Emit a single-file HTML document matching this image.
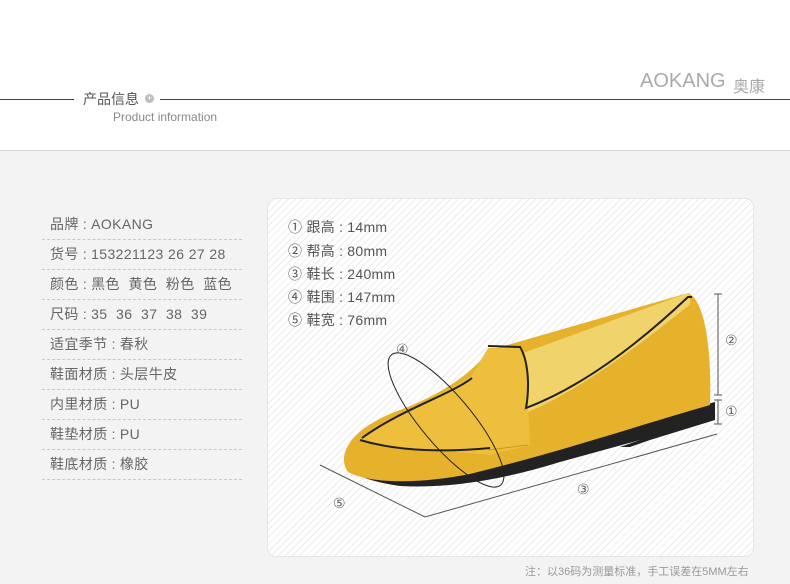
<!DOCTYPE html>
<html><head><meta charset="utf-8"><style>
body{margin:0;width:790px;height:584px;overflow:hidden;font-family:"Liberation Sans","Noto Sans CJK SC",sans-serif;background:#f3f3f3;position:relative}
.top{position:absolute;left:0;top:0;width:790px;height:150px;background:#fff;border-bottom:1px solid #d6d6d6}
.abs{position:absolute}
.row{position:absolute;left:42px;width:200px;height:30px;border-bottom:1px dashed #c8c8c8;font-size:14px;color:#666;line-height:29px;padding-left:8px;box-sizing:border-box;white-space:nowrap;letter-spacing:0.4px}
.card{position:absolute;left:267px;top:198px;width:485px;height:357px;border-radius:9px;border:1px solid #e6e6e6;background:#fff repeating-linear-gradient(135deg,#fff 0 4px,#ececec 4px 5px)}
.m{position:absolute;left:288px;font-size:14px;color:#555;white-space:nowrap;letter-spacing:0.3px}
.c{margin:0 4px}
</style></head><body>
<div class="top">
<div class="abs" style="left:0;top:99px;width:74px;height:1px;background:#444"></div>
<div class="abs" style="left:83px;top:89px;font-size:14px;color:#555">产品信息</div>
<div class="abs" style="left:145px;top:94px;width:9px;height:9px;border-radius:50%;background:#bbb;color:#fff;font-size:9px;line-height:9px;text-align:center">+</div>
<div class="abs" style="left:160px;top:99px;width:630px;height:1px;background:#444"></div>
<div class="abs" style="left:113px;top:110px;font-size:12px;color:#888">Product information</div>
<div class="abs" style="left:640px;top:70px;font-size:20px;color:#aaa">AOKANG</div>
<div class="abs" style="left:733px;top:73px;font-size:16px;color:#aaa">奥康</div>
</div>
<div class="row" style="top:210px">品牌<span class="c">:</span>AOKANG</div>
<div class="row" style="top:240px">货号<span class="c">:</span>153221123 26 27 28</div>
<div class="row" style="top:270px">颜色<span class="c">:</span>黑色&nbsp; 黄色&nbsp; 粉色&nbsp; 蓝色</div>
<div class="row" style="top:300px">尺码<span class="c">:</span>35&nbsp; 36&nbsp; 37&nbsp; 38&nbsp; 39</div>
<div class="row" style="top:330px">适宜季节<span class="c">:</span>春秋</div>
<div class="row" style="top:360px">鞋面材质<span class="c">:</span>头层牛皮</div>
<div class="row" style="top:390px">内里材质<span class="c">:</span>PU</div>
<div class="row" style="top:420px">鞋垫材质<span class="c">:</span>PU</div>
<div class="row" style="top:450px">鞋底材质<span class="c">:</span>橡胶</div>
<div class="card"></div>
<div class="m" style="top:217px">① 跟高<span class="c">:</span>14mm</div>
<div class="m" style="top:241px">② 帮高<span class="c">:</span>80mm</div>
<div class="m" style="top:264px">③ 鞋长<span class="c">:</span>240mm</div>
<div class="m" style="top:287px">④ 鞋围<span class="c">:</span>147mm</div>
<div class="m" style="top:310px">⑤ 鞋宽<span class="c">:</span>76mm</div>
<svg class="abs" style="left:0;top:0" width="790" height="584">
<path d="M346 460 Q345 478 400 486 Q470 490 560 462 L640 440 L620 447 L630 447 L650 440 L715 420 L715 402 L648 420 Q570 440 470 468 Z" fill="#222"/>
<path d="M348 472 C336 455 350 428 400 410 C440 395 470 375 490 350 L688 293 C705 300 712 350 710 405 C640 425 560 452 470 474 C420 484 370 484 348 472Z" fill="#e6b22c"/>
<path d="M515 356 L688 293 C692 300 690 306 688 306 C640 345 580 390 528 412 Z" fill="#f0d36a"/>
<path d="M360 440 C380 420 440 398 472 375 L488 348 L520 348 C528 360 530 385 528 405 L530 445 L490 455 C440 450 390 448 360 440Z" fill="#eebf3c"/>
<path d="M360 440 C400 452 450 452 490 448 M362 438 C400 410 450 395 472 378 M488 346 L520 347 C528 360 530 385 526 408 Q600 380 688 297 L692 297" stroke="#222" stroke-width="2" fill="none"/>
<path d="M488 450 L528 445" stroke="#c99a20" stroke-width="1" fill="none"/>
<ellipse cx="446" cy="420" rx="85" ry="25" transform="rotate(50 446 420)" fill="none" stroke="#222" stroke-width="1"/>
<path d="M718 294 V395 M714 294 H722 M714 395 H722 M718 400 V424 M714 400 H722 M714 424 H722 M320 465 L425 517 L717 434" stroke="#555" stroke-width="1" fill="none"/>
<g font-size="14" fill="#666" font-family="Liberation Sans,DejaVu Sans,sans-serif">
<text x="396" y="354">④</text><text x="725" y="345">②</text><text x="725" y="416">①</text><text x="577" y="494">③</text><text x="333" y="508">⑤</text></g>
</svg>
<div class="abs" style="left:525px;top:563px;font-size:11px;color:#999">注：以36码为测量标准，手工误差在5MM左右</div>
</body></html>
